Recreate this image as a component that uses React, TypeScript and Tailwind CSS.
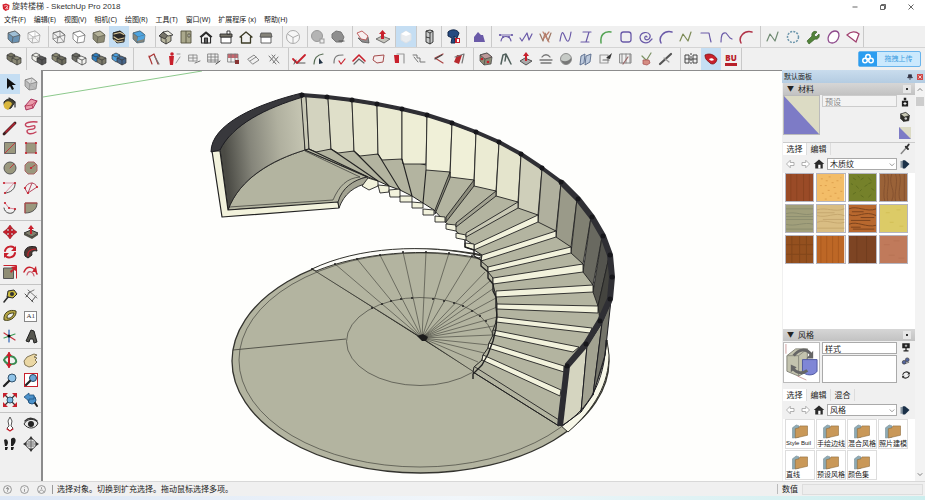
import type { ReactNode } from 'react';
import { clsx } from 'clsx';

const INK = '#2b2b2b';
const RED = '#c8202c';
const PURPLE = '#6a5aa8';

// Small shape helpers, all drawn on a 16x16 grid
function cube(fill: string, side: string, stroke = '#555') {
  return (
    <g stroke={stroke} strokeWidth="0.7" strokeLinejoin="round">
      <path d="M2 4 9 2l5 4-1 7-7 1-4-4z" fill={side} />
      <path d="M2 4 9 2l5 4-7 2z" fill={fill} />
      <path d="M7 8 6 14" fill="none" />
    </g>
  );
}

function solids(a: string, b: string) {
  return (
    <g stroke="#333" strokeWidth="0.7" strokeLinejoin="round">
      <path d="M1 4 5 2l4 2v6l-4 1-4-3z" fill={a} />
      <path d="M6 7 10 5l5 2v5l-4 2-5-3z" fill={b} />
      <path d="M6 7l5 2 4-2M11 9v5M1 4l4 2 4-2" fill="none" />
    </g>
  );
}

function line(d: string, color = INK, width = 1.2) {
  return <path d={d} fill="none" stroke={color} strokeWidth={width} strokeLinecap="round" strokeLinejoin="round" />;
}

function dots(points: number[][], color = RED) {
  return points.map(([x, y]) => <circle key={`${x}-${y}`} cx={x} cy={y} r="1.1" fill={color} />);
}

const icons: Record<string, ReactNode> = {
  select: <path d="M5 2v11l3-3 2 4 2-1-2-4h4z" fill="#111" />,
  xray: cube('#9fbfd6', '#6b93b3'),
  backEdges: <g>{cube('#fff', '#f4f4f4', '#999')}{line('M9 2v7l4 4M9 9l-7 1', '#bbb', 0.7)}</g>,
  wireframe: <g>{cube('none', 'none', '#666')}{line('M9 2v6L2 10M9 8l4 5', '#777', 0.7)}</g>,
  hiddenLine: cube('#fff', '#fff', '#666'),
  shaded: cube('#b5b39a', '#8e8c75', '#5d5c4d'),
  textured: (
    <g>
      {cube('#2d2b2a', '#2d2b2a', '#222')}
      {line('M3 5l6-1.500 4 2M3 8l4 2.500 6-1.500M3 11l4 2 5-1', '#d9c79b', 1.2)}
    </g>
  ),
  mono: (
    <g>
      {cube('#4ea4e0', '#85857b', '#4b6577')}
      <path d="M7 8l7-2-1 4-7 2z" fill="#4ea4e0" />
    </g>
  ),
  iso: (
    <g stroke={INK} strokeWidth="0.8" strokeLinejoin="round">
      <path d="M3 7v5l5 3 5-3V6L9 3z" fill="#b9b79f" />
      <path d="M1 7 5 3l5 3-3 4z" fill="#77756a" />
      <path d="M5 3l5-1 5 4-5 1z" fill="#e9e9df" />
      <path d="M8 10v5" />
    </g>
  ),
  top: (
    <g stroke="#55533f" strokeWidth="0.9">
      <path d="M3 2h10v12H3z" fill="#aaa88c" />
      <path d="M8 2v12M10 5h2v3h-2z" fill="#ddd" />
    </g>
  ),
  front: (
    <g stroke={INK} strokeWidth="1.2" strokeLinejoin="round">
      <path d="M2 8 8 3l6 5M3.500 8v6h9V8L8 4z" fill="#fff" />
      <path d="M6.500 14V9h3v5z" fill="#666" />
    </g>
  ),
  right: (
    <g stroke={INK} strokeWidth="0.9">
      <path d="M3 8h10v6H3z" fill="#fff" />
      <path d="M2 5h12v3H2z" fill="#77756a" />
      <path d="M9 2h3v3H9z" fill="#fff" />
    </g>
  ),
  back: line('M2 8 8 3l6 5H12.500v6h-9V8z', '#3b3a25', 1.3),
  left: (
    <g stroke="#555" strokeWidth="0.9">
      <path d="M3 8h10v6H3z" fill="#fff" />
      <path d="M3 4h10l1 4H2z" fill="#86847a" />
    </g>
  ),
  sphere: (
    <g stroke="#999" strokeWidth="0.8" fill="#f7f7f7">
      <circle cx="8" cy="8" r="6.500" />
      <path d="M2.500 5 8 8.500 13.500 6M8 8.500V14" fill="none" />
    </g>
  ),
  ballLight: <g><circle cx="7" cy="7" r="5.500" fill="#b4b4b4" stroke="#999" /><rect x="10" y="10" width="4" height="4" fill="#eee" stroke="#999" /></g>,
  ballDark: <g><path d="M2 5 6 2l5 1 3 5-2 5H6L2 9z" fill="#8f8f8f" stroke="#777" />{line('M9 12h5', '#555')}</g>,
  bevel: (
    <g>
      <path d="M3 9l4 4 7 1-1-6-5 2z" fill="#8d8d8d" stroke="#555" strokeWidth="0.8" />
      <path d="M2 4 7 2l6 5-2 4-5-1z" fill="#f8f0f0" stroke="#b55" strokeWidth="0.9" />
    </g>
  ),
  pushUp: (
    <g>
      <path d="M1 10l6-3 8 3-6 4z" fill="#c5c5bd" stroke="#555" strokeWidth="0.8" />
      <path d="M7.500 1 11 5H9v5H6V5H4z" fill={RED} />
    </g>
  ),
  softBall: <g><path d="M3 5 8 2l5 3v6l-5 3-5-3z" fill="#e9ecef" stroke="#dfe3e7" /><path d="M3 5 8 2l5 3-5 2z" fill="#fff" /></g>,
  cabinet: (
    <g stroke={INK} strokeWidth="0.9" fill="#c7c9c9">
      <path d="M5 2l4-1 3 1v11l-3 2-4-2z" />
      <path d="M9 4v11M5 2l4 2 3-2M5 8l4 1" fill="none" />
    </g>
  ),
  elephant: (
    <g>
      <path d="M2 3c3-3 9-3 11 1l-2 5-3-2 1 7H5L6 9 2 7z" fill="#254a80" stroke="#14284a" />
      <path d="M9 9h5v5H9z" fill={RED} /><path d="M11 10h2v3h-2z" fill="#fff" />
    </g>
  ),
  purpleBox: <path d="M3 13V8l4-5 3 3h2l2 7z" fill={PURPLE} />,
  arcDots: <g>{line('M3 12c1-6 9-6 10 0', PURPLE)}{line('M2 6h12', PURPLE, 0.9)}{dots([[2, 6], [14, 6], [5, 8], [11, 8]], PURPLE)}</g>,
  zig: line('M2 9l2 3 5-8 2 7 3-6', PURPLE),
  zigRed: <g>{line('M2 5l3 7 2-8 3 8 3-8', '#9c7764')}{line('M5 3l6 10M11 3 5 10', '#c08270')}</g>,
  wave: line('M2 12C4 0 5 3 7 8s4 8 6-5', PURPLE),
  iBeam: line('M5 3h8M11 3 8 13M3 13h8', PURPLE),
  arcGreen: line('M3 14C2 6 6 2 13 3', '#53a353', 1.5),
  rounded: <rect x="3" y="3" width="10" height="10" rx="2.500" fill="none" stroke={PURPLE} strokeWidth="1.300" />,
  spiral: line('M9 8c-1-2-3 0-2 2 2 2 6 0 5-4C10 2 3 3 2 8c0 5 5 7 9 5l3-3', PURPLE),
  arcPurple: line('M3 14C0 8 6 1 14 3', PURPLE, 1.5),
  zigOlive: line('M2 12 5 5l5 7 3-9', '#7c8a55'),
  hook: line('M3 4h8l1 5M12 9l1 4', PURPLE),
  hook2: line('M3 13C3 7 4 3 8 4l4 5 2 1', PURPLE),
  arcRed: line('M3 14C0 8 6 1 14 3', '#b03347', 1.5),
  zigGray: line('M2 12 5 5l5 7 3-9', '#6f8a72'),
  dashCircle: <circle cx="8" cy="8" r="5.500" fill="none" stroke="#6b95ab" strokeWidth="1.500" strokeDasharray="2 1.200" />,
  wrench: <path d="M2 12l5-5c-1-3 2-6 5-4L9 6l2 2 3-3c1 3-1 6-4 5l-6 5z" fill="#52833a" stroke="#3b6129" strokeWidth="0.700" />,
  leaf: <path d="M4 13C1 8 6 2 10 2s5 4 3 8-6 5-9 3z" fill="#fff" stroke="#8e4a8c" strokeWidth="1.300" />,
  pie: <path d="M2 6c4-4 9-4 12-1l-3 8z" fill="#fff" stroke="#a0406f" strokeWidth="1.300" />,

  outer: solids('#777563', '#8b8976'),
  intersect: solids('#f0f0ea', '#565656'),
  union: solids('#8d8b74', '#6e6d5e'),
  subtract: solids('#6e6e66', '#f1f1ee'),
  trim: solids('#2f7fc0', '#7d7b6b'),
  split: solids('#4ea0de', '#46658a'),

  curveRed: <g>{line('M3 5c1 3 2 5 3 8M3 6l5-3 4 10', '#a33')}{line('M9 6l4 7', '#777')}</g>,
  person: <g><path d="M3 5h5l-1 9H4z" fill={RED} /><circle cx="6" cy="3" r="1.800" fill={RED} />{line('M11 3h3M10 12l4-6', '#999', 1)}</g>,
  grid1: <g>{line('M3 4h8v6H3zM3 7h8M7 4v6', '#8a8a8a', 0.9)}{line('M9 12l5-2', '#777', 1)}</g>,
  grid2: <g>{line('M2 3h10v8H2zM2 6h10M2 9h10M5 3v8M9 3v8', '#777', 0.8)}{line('M10 13l4-3', '#444', 1)}</g>,
  grid3: <g><path d="M2 3h10v4H2z" fill="#c76870" />{line('M2 3h10v8H2zM5 3v8M9 3v8', '#777', 0.8)}<path d="M9 9h4v4H9z" fill="#833" /></g>,
  sheet: line('M2 8l6-4 5 5-6 4zM4 10l6-4', '#888', 1),
  clips: line('M3 5l7 8M6 4l7 8M4 10l5-6M7 12l5-6', '#777', 1),
  checkRed: <g>{line('M2 8l4 4 8-8', RED, 1.8)}{line('M7 12h7M5 9l-2 4', '#444', 0.9)}</g>,
  bend: <g>{line('M3 13C3 7 6 4 12 3', '#556b52')}<path d="M8 7l4 5-4 1z" fill="#234" /></g>,
  bendCheck: <g>{line('M3 12C3 5 6 4 12 4', '#777')}{line('M8 10l2 3 4-5', RED)}</g>,
  roof: <g>{line('M2 10l6-6 6 6', RED, 1.6)}{line('M3 13l5-5 5 4', '#666')}</g>,
  quad: <path d="M3 5l10-1-1 7-6 1-4-3z" fill="#f6eded" stroke="#a54b4b" />,
  redCorner: <g><path d="M3 4h5v8H4z" fill={RED} />{line('M6 3h7v9', '#999')}</g>,
  steps: line('M2 4h4v3h3v4h5M3 6l4 5', '#777', 1),
  angle: <g>{line('M12 3 4 7l8 5', '#a44')}{line('M11 4 4 8', '#444')}</g>,
  redFold: <g><path d="M6 4h5l-3 9-5-2z" fill="#b7292e" />{line('M4 6l9-3-2 9', '#777')}</g>,
  die: <g>{cube('#b99', '#8b8b76', '#444')}<circle cx="4" cy="8" r="1.300" fill={RED} /><circle cx="10" cy="11" r="1.300" fill={RED} /></g>,
  compass: line('M3 13 5 4l3-1 5 10M8 4 7 10', '#51605c', 1.5),
  extrude: <g><path d="M2 10l5-3 7 3-6 4z" fill="#aaa" stroke="#555" /><path d="M8 1l3 4H9v5H7V5H5z" fill={RED} /></g>,
  sweep: line('M2 9h12M3 12h10M4 6c2-3 6-3 8 0', '#777', 1.3),
  ballGray: <g><circle cx="8" cy="8" r="5.500" fill="#c6cac6" stroke="#777" strokeWidth="0.800" /><path d="M3 9c3 2 7 2 10-2v3c-2 4-8 5-10-1z" fill="#777" /></g>,
  panels: <g stroke="#56698a" strokeWidth="0.900" fill="#bcc9dc"><path d="M3 5l4-2-1 9-4 2zM8 5l5-2-1 8-5 3z" /></g>,
  noteArrow: <g>{line('M2 4h8v8H2z', '#999')}<path d="M14 2 8 7l4 1z" fill="#333" />{line('M5 9h6', '#666')}</g>,
  film: <g>{line('M2 3h11v9H2zM4 3v9M8 3v9M12 3v9', '#888', 1)}{line('M5 13l5-7', '#966')}</g>,
  plant: <g>{line('M8 10l5-8M8 9 4 5', '#7a9163')}<path d="M5 9h6l1 3-3 2-4-1z" fill="#d68d83" stroke="#a55" strokeWidth="0.800" /></g>,
  pens: <g>{line('M2 13 13 3', '#555', 2.2)}{line('M6 7l5 4', '#999')}</g>,
  mirror: <g fill="none" stroke="#444"><path d="M2 4h4v8H2zM10 4h4v8h-4zM2 8h12" /><path d="M8 2v12" strokeDasharray="2 1" /></g>,
  cushion: <g><path d="M2 4c4-2 9-1 12 4-1 6-6 6-8 3-3-2-4-4-4-7z" fill={RED} stroke="#7d1010" strokeWidth="0.800" /><path d="M6 8c2-1 4-1 5 1-2 1-4 1-5-1z" fill="#fff" /></g>,

  bucket: (
    <g>
      <path d="M2 6c3-4 8-4 11 0l-4 6c-4 2-7 0-7-6z" fill="#48452f" stroke={INK} />
      <path d="M2 8c2-4 7-3 8 0L6 14C3 13 1 11 2 8z" fill="#d9b63c" />
      {line('M7 2l6 4v5', '#333')}
    </g>
  ),
  eraser: <g><path d="M2 10 8 3l6 2-4 7-7 2z" fill="#e99cab" stroke="#914" strokeWidth="0.800" />{line('M2 10l7-1 5-4M9 9l1 3', '#a24', 0.7)}</g>,
  component: <g>{cube('#ddd', '#bbb', '#777')}{line('M3 5l9 7M9 3 6 13', '#aaa', 0.7)}</g>,
  pencil: <g>{line('M2 14 13 3', '#3a2020', 2.8)}{line('M4 12 12.500 3.500', '#b32432', 1.7)}</g>,
  freehand: line('M14 2C8 1 0 3 3 6s9-3 9 1-8 1-8 4 4 4 9 1', '#c4425c', 1.4),
  rect: <g><path d="M2.500 2.500h11v11h-11z" fill="#9a987e" stroke="#666" />{line('M3 13 13 3', RED, 0.8)}</g>,
  rotRect: <g><path d="M3 3h10v10H3z" fill="#9a987e" stroke="#966" />{dots([[3, 3], [13, 3], [13, 13], [3, 13]])}</g>,
  circle: <g><circle cx="8" cy="8" r="6" fill="#9a987e" stroke="#555" />{line('M8 8l4-4', RED, 0.8)}</g>,
  polygon: <g><path d="M5 2h6l3 3v6l-3 3H5l-3-3V5z" fill="#9a987e" stroke="#a66" />{line('M8 8l4-3', RED, 0.8)}{dots([[8, 8]])}</g>,
  arc1: <g>{line('M2 3h10L3 13', '#d8879a', 0.9)}{line('M13 3C14 9 8 13 3 13', '#555', 1)}{dots([[2, 3], [13, 3], [3, 13]])}</g>,
  arc2: <g>{line('M2 8C5 1 12 2 14 7L5 13zM5 13 9 3', '#b8485f', 1)}{dots([[2, 8], [14, 7], [5, 13]])}</g>,
  arc3: <g>{line('M3 3l4 5 6 1', '#d8879a', 1)}{line('M13 9c0 6-10 6-11-1', '#444', 1)}{dots([[3, 3], [7, 8], [13, 9]])}</g>,
  arc4: <g><path d="M2 3h12c0 6-4 10-12 10z" fill="#9a987e" stroke="#555" />{line('M2 13V3h12', '#c44', 0.9)}</g>,
  move: <g fill={RED} stroke="#8a0f18" strokeWidth="0.500"><path d="M8 1l3 4H9v2h2V5l4 3-4 3V9H9v2h2l-3 4-3-4h2V9H5v2L1 8l4-3v2h2V5H5z" /></g>,
  pushPull: <g><path d="M1 9l7-3 7 3-6 4z" fill="#807f6c" stroke="#333" /><path d="M1 9v2l8 4 6-4V9l-6 4z" fill="#525146" /><path d="M8 1l3 4H9v5H7V5H5z" fill={RED} /></g>,
  rotate: <g>{line('M3 7c1-5 8-6 10-2M13 9c-1 5-8 6-10 2', RED, 2)}<path d="M14 2v5h-5zM2 14V9h5z" fill={RED} /></g>,
  follow: <g><path d="M2 12C0 5 5 1 13 3l1 4c-4-1-6 1-5 4l-4 3z" fill="#4d3a35" stroke="#222" />{line('M5 12c-1-5 3-7 8-7', RED)}</g>,
  scale: <g><path d="M1.500 4h10v10.500h-10z" fill="#8f8d74" stroke="#555" /><path d="M1.500 1.500h13v13" fill="none" stroke={RED} /><path d="M8 7 11 5 9 3l5-1v5l-2-1-3 3z" fill={RED} /></g>,
  offset: <g>{line('M1 8C4 1 11 2 14 10', RED, 1.5)}{line('M4 11c1-5 6-4 7 1', '#c86070')}<path d="M9 8l4-6 1 6z" fill={RED} /></g>,
  tape: <g><path d="M6 3l6-1 3 4-4 4-6-1z" fill="#c9b83c" stroke={INK} /><circle cx="10" cy="6" r="2" fill="#333" />{line('M6 9 2 14', INK, 1.6)}</g>,
  dimension: <g>{line('M2 6l8 8M3 9l4-5M9 13l4-5', '#555', 1)}{line('M5 2l9 8M5 5l6-3', '#777', 1)}</g>,
  protractor: <path d="M2 12C1 4 8 1 14 3c1 5-5 11-12 9zm3-2c4 1 6-2 7-5-4 0-7 1-7 5z" fill="#b5a545" stroke="#45421c" fillRule="evenodd" />,
  axes: <g>{line('M7 2v12', '#2b62b5')}{line('M2 5l11 7', '#c22f3b')}{line('M2 10l11-4', '#3b9a56')}<circle cx="7" cy="8" r="1.500" /></g>,
  text3d: <path d="M3 13 8 2l3 1 3 11-3 1-1-4H7l-1 3z" fill="#56564f" stroke="#222" />,
  orbit: <g>{line('M2 8c2-5 10-5 12 0s-9 6-12 0', '#3a8b52', 2)}{line('M7 1v14', RED, 2)}<path d="M4 4l3-4 3 4zM4 12h6l-3 4z" fill={RED} /></g>,
  pan: <path d="M2 13 1 9l3-4 7-3 3 1-3 2 3 1-2 2 2 2-4 4-4 1z" fill="#ead7a4" stroke="#776b4b" strokeWidth="0.900" />,
  zoom: <g><circle cx="10" cy="6" r="4" fill="#8fc3e8" stroke="#31536d" />{line('M7 9 2 14', '#222', 2.3)}</g>,
  zoomWin: <g><rect x="1.500" y="1.500" width="13" height="13" fill="#fff" stroke={RED} /><circle cx="10" cy="6" r="3.500" fill="#6aa4d4" stroke="#2a435d" />{line('M7 9 3 13', '#222', 2.2)}</g>,
  extents: <g>{line('M3 3l10 10M13 3 3 13', '#333', 1.2)}<path d="M1 1h5L1 6zM15 1v5l-5-5zM1 15v-5l5 5zM15 15h-5l5-5z" fill={RED} /><circle cx="8" cy="8" r="3" fill="#7db8e0" stroke="#31536d" /></g>,
  previous: <g><circle cx="9" cy="8" r="4" fill="#4b91ca" stroke="#22537e" /><path d="M1 5 6 1v2h5v4H6v2z" fill="#4b91ca" stroke="#22537e" strokeWidth="0.800" />{line('M12 11l2 3', '#222', 2)}</g>,
  camera: <g><path d="M8 1l2 4-1 5 2 2-3 3-3-3 2-2-1-5z" fill="#fff" stroke="#555" />{line('M5 13l3 2 3-2', RED)}</g>,
  look: <g><path d="M1 8C4 2 12 2 15 7c-2 6-10 7-14 1z" fill="#e6e6e6" stroke="#333" /><circle cx="8" cy="8" r="3" fill="#222" />{line('M2 5c4-4 9-3 12 0', '#333', 1.5)}</g>,
  walk: <g fill="#222"><path d="M2 4c2-2 4 0 4 3l-1 3H3zM3 11h3l-1 3H3zM9 3c3-3 6 0 4 4l-2 3H9zM9 11h3l-1 3H9z" /></g>,
  section: <g><circle cx="8" cy="8" r="5" fill="#e5e5e5" stroke="#444" /><path d="M8 0l2 3H6zM8 16l2-3H6zM0 8l3-2v4zM16 8l-3-2v4z" fill="#333" />{line('M4 8h8M8 4v8M5 6h6M5 10h6', '#555', 0.8)}</g>,
  home: <g><path d="M1 8 8 2l7 6h-2v6H3V8z" fill={INK} /><path d="M7 9h3v5H7z" fill="#fff" /></g>,
  arrowLeft: <path d="M2 8l5-5v3h5v4H7v3z" fill="#fff" stroke="#999" />,
  arrowRight: <path d="M14 8 9 3v3H4v4h5v3z" fill="#fff" stroke="#999" />,
  details: <g><path d="M2 4h5v9H2z" fill="#8794a0" /><path d="M5 3h3l6 5-6 6H5z" fill="#1a3048" /></g>,
  dropper: <g>{line('M3 14l7-8', '#888', 2)}{line('M9 5l3 3M10 6l3-4', '#333', 2.5)}</g>,
  makeMat: <g><path d="M3 6h10v9H3zM6 1h4v4H6z" fill="#222" /><path d="M8 8v5M5.500 10.500h5" stroke="#fff" strokeWidth="1.500" /></g>,
  darkCube: <g>{cube('#c9c9b5', '#2e2e29', '#222')}<circle cx="9" cy="10" r="1.700" fill="#ccc" /></g>,
  screen: <g><path d="M2 2h12v8H2zM7 10h2v3H7zM4 13h8v2H4z" fill="#222" /><path d="M8 4v4M6 6h4" stroke="#fff" /></g>,
  clouds: <g fill="#5566a0" stroke="#333"><circle cx="5" cy="10" r="3" /><circle cx="10" cy="6" r="3" /><path d="M7 12l6-2" /></g>,
  refresh: <g>{line('M3 7c1-4 8-6 10-1M13 9c-1 4-8 6-10 1', INK, 1.7)}<path d="M14 3v4h-4zM2 13V9h4z" fill={INK} /></g>,
};

function Icon({ name, className = 'size-4' }: { name: string; className?: string }) {
  return (
    <svg viewBox="0 0 16 16" className={clsx('shrink-0', className)} aria-hidden="true">
      {icons[name]}
    </svg>
  );
}

function ToolButton({ name, active = false }: { name: string; active?: boolean }) {
  return (
    <button
      type="button"
      aria-label={name}
      className={clsx('flex h-full w-5 shrink-0 items-center justify-center', active && 'bg-[#c5def3]')}
    >
      {name === 'label' && (
        <span className="border border-[#888] bg-white px-px font-['Liberation_Serif',serif] text-[7px] leading-[9px] text-[#333]">A1</span>
      )}
      {name === 'bu' && (
        <span className="flex flex-col items-center text-[#b8202a]">
          <span className="text-[8px] font-black leading-[10px]">BU</span>
          <span className="h-[3px] w-3 bg-[#b8202a]" />
        </span>
      )}
      {icons[name] && <Icon name={name} />}
    </button>
  );
}

type Group = { gap: string; tools: string[] };

const topRow: Group[] = [
  { gap: 'px-1', tools: ['xray', 'backEdges'] },
  { gap: 'pr-1.5', tools: ['wireframe', 'hiddenLine', 'shaded', 'textured*', 'mono'] },
  { gap: 'pr-1.5', tools: ['iso', 'top', 'front', 'right', 'back', 'left'] },
  { gap: 'pr-1', tools: ['sphere'] },
  { gap: 'pr-1', tools: ['ballLight', 'ballDark'] },
  { gap: 'pr-0.5', tools: ['bevel', 'pushUp'] },
  { gap: '', tools: ['softBall*'] },
  { gap: 'px-0.5', tools: ['cabinet'] },
  { gap: 'px-0.5', tools: ['elephant'] },
  { gap: 'px-0.5', tools: ['purpleBox'] },
  {
    gap: 'px-1',
    tools: ['arcDots', 'zig', 'zigRed', 'wave', 'iBeam', 'arcGreen', 'rounded', 'spiral', 'arcPurple', 'zigOlive', 'hook', 'hook2', 'arcRed'],
  },
  { gap: 'pl-0.5', tools: ['zigGray', 'dashCircle', 'wrench', 'leaf', 'pie'] },
];

const secondRow: Group[] = [
  { gap: 'pl-1 pr-0.5', tools: ['outer'] },
  { gap: 'pl-0.5 pr-1', tools: ['intersect', 'union', 'subtract', 'trim', 'split'] },
  { gap: 'pl-2.5 pr-1', tools: ['curveRed', 'person', 'grid1', 'grid2', 'grid3', 'sheet', 'clips'] },
  { gap: 'pr-1', tools: ['checkRed', 'bend', 'bendCheck', 'roof', 'quad', 'redCorner', 'steps', 'angle', 'redFold'] },
  { gap: 'pl-0.5 pr-1', tools: ['die', 'compass', 'extrude', 'sweep', 'ballGray', 'panels', 'noteArrow', 'film', 'plant', 'pens'] },
  { gap: '', tools: ['mirror', 'cushion*', 'bu'] },
];

const palette: string[][] = [
  ['select*', 'component', 'bucket', 'eraser'],
  ['pencil', 'freehand', 'rect', 'rotRect', 'circle', 'polygon', 'arc1', 'arc2', 'arc3', 'arc4'],
  ['move', 'pushPull', 'rotate', 'follow', 'scale', 'offset'],
  ['tape', 'dimension', 'protractor', 'label', 'axes', 'text3d'],
  ['orbit', 'pan', 'zoom', 'zoomWin', 'extents', 'previous'],
  ['camera', 'look', 'walk', 'section'],
];

function Toolbar({ groups }: { groups: Group[] }) {
  return (
    <div className="flex h-full">
      {groups.map((group) => (
        <div key={group.tools[0]} className={clsx('flex border-r border-[#c9c9c9]', group.gap)}>
          {group.tools.map((tool) => (
            <ToolButton key={tool} name={tool.replace('*', '')} active={tool.endsWith('*')} />
          ))}
        </div>
      ))}
    </div>
  );
}

// Geometry of the staircase, in model view coordinates
type Point = [number, number];

const pts = (list: Point[]) => list.map((p) => p.join(',')).join(' ');

const rail: Point[] = [
  [302, 95], [327, 97], [352, 100], [377, 104], [402, 109], [427, 115], [452, 123], [476, 132], [499, 142],
  [521, 154], [542, 168], [561, 182], [578, 199], [592, 217], [603, 236], [610, 255], [612, 277], [610, 299],
  [600, 321], [586, 344], [567, 366],
];

// top of each wall seam, where it meets the tread, and the corner of the tread below it
const seams: { top: Point; foot: Point; step: Point; back: Point; shade: string }[] = [
  { top: [306, 96], foot: [309, 149], step: [309, 149], back: [316, 152], shade: '#d3d3bf' },
  { top: [328, 98], foot: [331, 149], step: [331, 149], back: [338, 153], shade: '#dfdfc9' },
  { top: [352, 101], foot: [354, 151], step: [354, 151], back: [360, 156], shade: '#e6e6ce' },
  { top: [377, 105], foot: [378, 154], step: [378, 154], back: [382, 160], shade: '#eaead2' },
  { top: [402, 110], foot: [402, 159], step: [402, 159], back: [403, 164], shade: '#eeeed6' },
  { top: [427, 116], foot: [426, 164], step: [426, 170], back: [426, 170], shade: '#f0f0d8' },
  { top: [452, 124], foot: [450, 172], step: [450, 177], back: [450, 177], shade: '#f0f0d8' },
  { top: [476, 133], foot: [474, 180], step: [474, 186], back: [474, 186], shade: '#ebebd3' },
  { top: [499, 143], foot: [496, 191], step: [496, 196], back: [496, 196], shade: '#e4e4cc' },
  { top: [521, 155], foot: [518, 202], step: [518, 208], back: [518, 208], shade: '#cfcfba' },
  { top: [542, 169], foot: [538, 215], step: [538, 222], back: [538, 222], shade: '#b0b09e' },
  { top: [561, 183], foot: [556, 231], step: [556, 237], back: [556, 237], shade: '#9a9a89' },
  { top: [577, 199], foot: [571, 247], step: [571, 253], back: [571, 253], shade: '#808072' },
  { top: [591, 217], foot: [583, 264], step: [583, 272], back: [583, 272], shade: '#696960' },
  { top: [602, 237], foot: [593, 285], step: [593, 292], back: [593, 292], shade: '#54544e' },
  { top: [609, 257], foot: [598, 306], step: [598, 313], back: [598, 313], shade: '#494945' },
];

// cream riser faces: inner top, inner bottom, outer bottom, outer top
const risers: Point[][] = [
  [[474, 245], [474, 250], [538, 222], [538, 215]],
  [[482, 255], [481, 261], [556, 237], [556, 231]],
  [[488, 267], [488, 272], [571, 253], [571, 247]],
  [[493, 278], [493, 284], [583, 272], [583, 264]],
  [[496, 291], [496, 297], [593, 292], [593, 285]],
  [[497, 304], [497, 309], [598, 313], [598, 306]],
  [[497, 317], [496, 322], [590, 333], [592, 328]],
  [[493, 330], [493, 335], [573, 352], [579, 347]],
  [[489, 343], [488, 348], [564, 372], [564, 366]],
  [[483, 355], [482, 360], [560, 396], [561, 390]],
];

// short inner faces that climb along the open edge
const noses: Point[][] = [
  [[368, 178], [378, 181], [378, 186], [369, 190], [362, 186]],
  [[378, 185], [389, 186], [389, 192], [380, 193]],
  [[389, 190], [400, 189], [400, 197], [390, 197]],
  [[400, 196], [412, 196], [412, 202], [400, 202]],
  [[412, 202], [423, 203], [423, 208], [412, 208]],
  [[423, 209], [434, 210], [434, 215], [423, 215]],
  [[435, 216], [445, 217], [445, 222], [435, 222]],
  [[446, 224], [456, 225], [456, 231], [446, 229]],
  [[456, 233], [466, 235], [466, 240], [456, 238]],
  [[465, 243], [474, 244], [474, 250], [465, 247]],
];

const fan: Point[] = [
  [335, 264], [357, 259], [380, 255], [403, 252], [426, 252], [449, 253], [472, 256], [485, 272], [490, 281],
  [494, 288], [496, 298], [497, 307], [497, 317], [494, 326], [492, 335], [489, 345], [484, 353], [478, 362],
];

function Staircase() {
  return (
    <svg viewBox="43 71 739 409" className="block w-full" role="img" aria-label="旋转楼梯">
      <defs>
        <linearGradient id="wall" x1="0" x2="1" y1="0.15" y2="0">
          <stop offset="0" stopColor="#4b4b45" />
          <stop offset="0.3" stopColor="#85857a" />
          <stop offset="0.65" stopColor="#b0b09f" />
          <stop offset="1" stopColor="#c9c9b6" />
        </linearGradient>
      </defs>
      <path d="M43 97 202 71" stroke="#8cc98c" strokeWidth="1" />

      {/* ground disc */}
      <g fill="#b3b4a0" stroke="#33332e" strokeWidth="1">
        <ellipse cx="420.500" cy="361" rx="188.500" ry="112" strokeWidth="1.300" />
        <path d="M609 355c0 28-14 54-41 77l-8-7c27-16 43-45 47-85z" fill="#f7f7e8" />
        <ellipse cx="420" cy="360" rx="181" ry="107" strokeWidth="0.600" />
        <path d="M312 269C358 247 424 243 482 256l-3 2C425 247 360 253 316 271z" fill="#fbfbf7" />
        <ellipse cx="420" cy="341.500" rx="73.500" ry="44" fill="none" strokeWidth="0.600" />
      </g>
      <g stroke="#3c3c36" strokeWidth="0.600">
        {fan.map(([x, y]) => (
          <line key={`${x}-${y}`} x1="422" y1="338" x2={x} y2={y} />
        ))}
        <path d="M312 269 422 338l52 34M233 350l113-11" strokeWidth="0.800" />
      </g>
      <path d="M417 336l6-2 5 3-2 4h-4z" fill="#1c1c1c" />
      {fan.slice(0, 7).map(([x, y]) => (
        <circle key={`${x}-${y}`} cx={x} cy={y} r="1" fill="#222" />
      ))}
      <g fill="#222">
        {[[312, 269], [372, 308], [382, 304], [391, 301], [401, 299], [412, 298], [433, 299], [444, 301], [454, 303], [463, 306], [472, 311], [480, 316], [486, 321]].map(([x, y]) => (
          <circle key={x} cx={x} cy={y} r="1" />
        ))}
      </g>

      {/* landing */}
      <g stroke="#222" strokeWidth="0.900" strokeLinejoin="round">
        <path d="M228 210c10-30 44-50 77-60l62 27c-13 3-22 11-27 26z" fill="#b3b4a0" />
        <path d="M220 149c14-25 48-43 82-54l3 55c-33 10-65 28-77 60z" fill="url(#wall)" />
        <path d="M212 151h8l8 59 110-8 1 6-117 9z" fill="#f2f2dc" strokeWidth="1.200" />
        <path d="M229 207l104-7c6-14 14-22 27-23l-55-26" fill="none" strokeWidth="0.600" />
        <path d="M338 202c4-14 15-22 29-25l2 6c-15 3-25 11-30 25z" fill="#a3a392" />
        <path d="M301 95l4 55 4-1-3-53z" fill="#c8c8b5" />
      </g>

      {/* treads */}
      <polygon
        fill="#b3b4a0"
        stroke="#222"
        strokeWidth="1"
        points={pts([
          [305, 150], [309, 149], [331, 149], [354, 151], [378, 154], [402, 159], [426, 165], [450, 172], [474, 180], [496, 191],
          [518, 202], [538, 215], [556, 231], [571, 247], [583, 264], [593, 285], [600, 306], [600, 325],
          [567, 366], [559, 426], [473, 372], [474, 367], [482, 360], [483, 355], [488, 348], [489, 343],
          [493, 335], [493, 330], [496, 322], [497, 309], [497, 304], [496, 297], [493, 284], [493, 278], [488, 272],
          [488, 267], [481, 261], [482, 255], [474, 250], [474, 245], [466, 240], [456, 231], [445, 222],
          [434, 210], [423, 203], [412, 196], [400, 190], [389, 186], [378, 181], [368, 177],
        ])}
      />
      <g stroke="#222" strokeWidth="0.900" strokeLinejoin="round">
        {seams.slice(0, -1).map((seam, i) => (
          <polygon
            key={seam.shade + i}
            fill={seam.shade}
            points={pts([seam.top, seams[i + 1].top, seams[i + 1].foot, seam.back, seam.step])}
          />
        ))}
        <polygon fill="#44443f" points="609,257 612,277 609,299 600,321 598,306" />
        {risers.map((face) => (
          <polygon key={face[0].join()} fill="#f2f2dc" points={pts(face)} />
        ))}
        {noses.map((face) => (
          <polygon key={face[0].join()} fill="#f2f2dc" points={pts(face)} />
        ))}
        <g fill="#8c8c7c">
          <path d="M450 172v6l-15 36v-4z" />
          <path d="M474 180v6l-28 36v-5z" />
          <path d="M496 191v5l-40 31v-4z" fill="#a3a392" />
          <path d="M518 202v6l-52 29v-4z" fill="#c9c9b5" />
        </g>
        <path d="M309 149l59 28M331 149l47 32M354 151l35 35M378 154l22 36M402 159l10 37M426 170l-3 33" fill="none" strokeWidth="1.100" />
        <path d="M475 367l84 53M473 372l86 54" fill="none" />
        <path d="M465 240v7l9 3v6l7 4v6l7 6v6l5 6v7l3 6v10l1 8-1 13-3 13-5 13-6 11-9 9v5" fill="none" strokeWidth="1.400" />
      </g>

      {/* outer wall next to the first steps */}
      <g stroke="#1d1d22" strokeLinejoin="round">
        <path d="M567 368l20-22-6 66-19 14z" fill="#d5d5c0" />
        <path d="M587 346l15-23-9 72-12 17z" fill="#a2a291" />
        <path d="M602 323l9-23-6 55-12 40z" fill="#74746a" />
        <path d="M563 425c25-16 42-42 43-85" fill="none" />
        <path d="M567 366l-7 60" stroke="#2c2c31" strokeWidth="6" />
      </g>

      {/* handrail */}
      <path d="M211 152c0-28 46-48 91-59l1 4c-37 11-71 28-83 53z" fill="#38383c" stroke="#1d1d22" />
      <polyline points={pts(rail.slice(0, 12))} fill="none" stroke="#2f2f34" strokeWidth="4" strokeLinejoin="round" />
      <polyline points={pts(rail.slice(11))} fill="none" stroke="#2f2f34" strokeWidth="6" strokeLinejoin="round" />
      {rail.map(([x, y]) => (
        <circle key={`${x}-${y}`} cx={x} cy={y} r="2.500" fill="#17171b" />
      ))}
    </svg>
  );
}

const menus = ['文件(F)', '编辑(E)', '视图(V)', '相机(C)', '绘图(R)', '工具(T)', '窗口(W)', '扩展程序 (x)', '帮助(H)'];

const woods = [
  { base: '#9a4b27', grain: '#8b4421' },
  { base: '#f3bd68', grain: '#dd9f4c' },
  { base: '#75812a', grain: '#5f6d20' },
  { base: '#9a6238', grain: '#85522f' },
  { base: '#a19f7b', grain: '#8b8c6e' },
  { base: '#d9bd83', grain: '#c6a870' },
  { base: '#b8682e', grain: '#7b431d' },
  { base: '#dccb67', grain: '#d3bf56' },
  { base: '#94501f', grain: '#82461b' },
  { base: '#bd6726', grain: '#aa5a1f' },
  { base: '#7d4423', grain: '#713d1f' },
  { base: '#c07a5b', grain: '#b87355' },
];

const grains = [
  'M5 0v28M11 0v28M18 0v28M24 0v28',
  'M4 5h2M12 3h2M20 7h2M8 12h2M17 14h2M24 18h2M5 20h2M13 23h2M21 25h2M3 12h2M9 7h2M15 9h2M24 4h1M11 17h2M18 20h2M8 26h2',
  'M4 4l3 2M12 6l3-2M20 4l3 3M7 12l3 3M16 13l3-2M23 15l3 2M4 21l3-2M12 22l3 2M20 24l3-3M9 2l2 2M2 10l2 1M20 10l3-1M11 18l2-2',
  'M4 0c3 10-2 18 1 28M12 0c-4 12 5 16 0 28M20 0c3 9-3 20 1 28M25 0v28M8 0c2 12-2 18 0 28M16 0c3 10-2 20 0 28',
  'M0 4h28M0 9c10-3 18 3 28 0M0 12h28M0 15h28M0 20c9 3 19-3 28 0M0 25h28',
  'M0 5c10-3 18 3 28-1M0 11c10 3 18-4 28 0M0 18c9-4 19 3 28 0M0 24h28M0 8h18M6 15h22',
  'M0 4c8-4 18 4 28 0M0 10c9 4 16-5 28 1M2 16h20M0 20c8-4 18 4 28 1M4 25h22M3 7h12M12 13h14M2 23h10',
  'M6 8h4M17 5h4M10 18h4M20 22h4',
  'M6 0v28M14 0v28M21 0v28M0 9h28M0 19h28',
  'M4 0v28M10 0v28M16 0v28M22 0v28',
  'M8 0v28M18 0v28',
  'M4 9h6M14 5h6M9 20h6M19 23h6',
];

const folders = ['Style Buil', '手绘边线', '混合风格', '照片建模', '直线', '预设风格', '颜色集'];

function PanelHeader({ title }: { title: string }) {
  return (
    <div className="flex h-3 items-center bg-gradient-to-b from-[#d6d6d6] to-[#c2c2c2] px-1 text-[#222]">
      <span className="mr-1 text-[7px]">▼</span>
      <h2 className="flex-1">{title}</h2>
      <button type="button" aria-label={`关闭${title}`} className="flex size-2 items-center justify-center bg-[#e6e6e6]">
        <span className="size-0.5 bg-[#333]" />
      </button>
    </div>
  );
}

function Tabs({ names, children }: { names: string[]; children?: ReactNode }) {
  return (
    <div className="flex h-3 items-center">
      {names.map((name, i) => (
        <button
          key={name}
          type="button"
          className={clsx('h-full w-6 border-r border-[#ddd] text-center', i === 0 && 'bg-white')}
        >
          {name}
        </button>
      ))}
      <span className="ml-auto pr-1">{children}</span>
    </div>
  );
}

function NavRow({ label, value }: { label: string; value: string }) {
  return (
    <div className="flex h-[18px] items-center gap-0.5 pl-0.5 pr-1">
      <button type="button" aria-label="后退"><Icon name="arrowLeft" className="size-3" /></button>
      <button type="button" aria-label="前进"><Icon name="arrowRight" className="size-3" /></button>
      <button type="button" aria-label="主页"><Icon name="home" className="size-3" /></button>
      <div className="relative min-w-0 flex-1">
        <select aria-label={label} className="block h-3 w-full appearance-none border border-[#aaa] bg-white px-0.5 text-[8px] leading-[10px]">
          <option>{value}</option>
        </select>
        <svg viewBox="0 0 8 8" className="pointer-events-none absolute right-0.5 top-1 size-1.5" aria-hidden="true">
          <path d="M1 2l3 3 3-3" fill="none" stroke="#777" />
        </svg>
      </div>
      <button type="button" aria-label="详细信息"><Icon name="details" className="size-3" /></button>
    </div>
  );
}

function MaterialsPanel() {
  return (
    <section className="flex flex-1 flex-col">
      <PanelHeader title="材料" />
      <div className="flex h-12 gap-0.5 border-b border-[#ccc] pr-1">
        <svg viewBox="0 0 36 40" className="h-10 w-[37px] border border-[#bbb]" preserveAspectRatio="none" aria-hidden="true">
          <path d="M0 0h36v40H0z" fill="#dcdbc4" />
          <path d="M0 0v40h36z" fill="#7d7bc6" />
        </svg>
        <input aria-label="材料名称" defaultValue="预设" className="h-3 min-w-0 flex-1 border border-[#ccc] bg-[#f3f3f3] px-0.5 text-[#888]" />
        <div className="flex flex-col items-center gap-1 pt-0.5">
          <button type="button" aria-label="创建材质"><Icon name="makeMat" className="size-[10px]" /></button>
          <button type="button" aria-label="显示辅助"><Icon name="darkCube" className="size-3" /></button>
          <svg viewBox="0 0 12 12" className="size-3" aria-hidden="true">
            <path d="M0 0h12v12H0z" fill="#dcdbc4" />
            <path d="M0 0v12h12z" fill="#7d7bc6" />
          </svg>
        </div>
      </div>
      <Tabs names={['选择', '编辑']}>
        <Icon name="dropper" className="size-3" />
      </Tabs>
      <NavRow label="材质集" value="木质纹" />
      <div className="flex-1 bg-white pl-0.5">
        <div className="grid w-[123px] grid-cols-4 gap-[2px]">
          {woods.map((wood, i) => (
            <button key={wood.base} type="button" aria-label={`木质纹 ${i + 1}`} className="h-[29px] border border-[#b5b5c0]">
              <svg viewBox="0 0 28 28" className="size-full" preserveAspectRatio="none" aria-hidden="true">
                <path d="M0 0h28v28H0z" fill={wood.base} />
                <path d={grains[i]} fill="none" stroke={wood.grain} strokeWidth="1" />
              </svg>
            </button>
          ))}
        </div>
      </div>
    </section>
  );
}

function StylesPanel() {
  return (
    <section>
      <PanelHeader title="风格" />
      <div className="flex h-11 gap-0.5 pr-1 pt-px">
        <svg viewBox="0 0 36 40" className="h-[41px] w-[37px] border border-[#bbb] bg-white" aria-hidden="true">
          <path d="M3 13 12 6h12v23l-9 5-12-5z" fill="#c3c3ae" stroke="#85857a" />
          <path d="M3 13h12l9-7M15 13v21" fill="none" stroke="#8c8c80" />
          <path d="M19 17h15v12c-3 5-12 5-15 0z" fill="#7f86d6" stroke="#5159a0" />
          <path d="M10 13c5-7 13-8 18-1M24 28c-5 4-11 3-15-2" fill="none" stroke="#666" strokeWidth="3" />
          <path d="M30 8v8h-7zM7 30v-8l6 3z" fill="#666" />
          <path d="M2 1v10M14 34l9 4" stroke="#b77" strokeWidth="0.700" />
        </svg>
        <div className="flex min-w-0 flex-1 flex-col gap-px">
          <input aria-label="样式名称" defaultValue="样式" className="h-3 w-full border border-[#aaa] bg-white px-0.5" />
          <textarea aria-label="样式说明" className="h-7 w-full resize-none border border-[#aaa] bg-white" />
        </div>
        <div className="flex flex-col items-center gap-1 pl-0.5">
          <button type="button" aria-label="辅助窗格"><Icon name="screen" className="size-[10px]" /></button>
          <button type="button" aria-label="新建样式"><Icon name="clouds" className="size-[10px]" /></button>
          <button type="button" aria-label="更新样式"><Icon name="refresh" className="size-[10px]" /></button>
        </div>
      </div>
      <div className="pt-1">
        <Tabs names={['选择', '编辑', '混合']} />
      </div>
      <NavRow label="样式集" value="风格" />
      <div className="bg-white pb-px pl-0.5">
        <div className="grid w-[123px] grid-cols-4 gap-px">
          {folders.map((folder, i) => (
            <button key={folder} type="button" className="flex h-[30px] flex-col items-center overflow-hidden border border-[#ddd] pt-1">
              <svg viewBox="0 0 20 16" className="h-[15px] w-5 shrink-0" aria-hidden="true">
                <path d="M2 4l4-3 3 1v12l-7 1z" fill="#8eabb5" stroke="#728994" strokeWidth="0.600" />
                <path d="M5 5l4-1 1-2 8 0v10L5 15z" fill="#c99858" stroke="#8b6738" strokeWidth="0.600" />
              </svg>
              <span className={clsx('w-full whitespace-nowrap text-left leading-[9px]', i === 0 ? "font-['Liberation_Sans',sans-serif] text-[6px]" : 'text-[7px]')}>
                {folder}
              </span>
            </button>
          ))}
        </div>
      </div>
    </section>
  );
}

export default function App() {
  return (
    <div className="flex min-h-screen flex-col bg-[#f0f0f0] font-['Noto_Sans','Noto_Sans_CJK_SC',sans-serif] text-[8px] leading-[10px] text-[#222]">
      <header className="bg-white">
        <div className="flex h-3.5 items-center pl-0.5">
          <svg viewBox="0 0 16 16" className="mr-0.5 size-2" aria-hidden="true">
            <path d="M1 3 8 1l7 3-1 9-7 3-5-4z" fill="#d51f2c" />
            <path d="M4 6l5-1 3 2-4 2 4 1-1 2-5-1" fill="none" stroke="#fff" strokeWidth="1.200" />
          </svg>
          <h1 className="font-['Liberation_Sans','Noto_Sans_CJK_SC',sans-serif] text-[8px] text-[#333]">旋转楼梯 - SketchUp Pro 2018</h1>
          <div className="ml-auto flex">
            {['M3 8h10', 'M3 5h8v8H3zM5 5V3h8v8h-2', 'M3 3l10 10M13 3 3 13'].map((d, i) => (
              <button key={d} type="button" aria-label={['最小化', '还原', '关闭'][i]} className="flex w-7 justify-center">
                <svg viewBox="0 0 16 16" className="size-2" aria-hidden="true">
                  <path d={d} fill="none" stroke="#333" strokeWidth="1.500" />
                </svg>
              </button>
            ))}
          </div>
        </div>
        <nav className="flex h-3 items-center gap-2 pl-1 text-[7px]">
          {menus.map((menu) => (
            <button key={menu} type="button">{menu}</button>
          ))}
        </nav>
      </header>

      <div className="h-[22px] border-b border-[#d4d4d4]">
        <Toolbar groups={topRow} />
      </div>
      <div className="flex h-[22px] items-center justify-between pr-1">
        <Toolbar groups={secondRow} />
        <button type="button" className="flex h-4 w-[63px] items-center rounded-xs border border-[#69b4ec] bg-[#cbe9fd] text-[7px] text-[#3c9ce0]">
          <span className="flex h-full w-[18px] items-center justify-center bg-[#2b9df0]">
            <svg viewBox="0 0 16 16" className="size-3" fill="none" stroke="#fff" strokeWidth="2" aria-hidden="true">
              <circle cx="8" cy="5" r="3" />
              <circle cx="4" cy="10" r="3" />
              <circle cx="12" cy="10" r="3" />
            </svg>
          </span>
          <span className="flex-1 text-center">拖拽上传</span>
        </button>
      </div>

      <main className="flex flex-1">
        <aside className="w-[43px] shrink-0 border-r-2 border-[#8c8c8c] pt-1" aria-label="大工具集">
          {palette.map((group, i) => (
            <div key={group[0]} className={clsx('grid grid-cols-2', i > 0 && 'mt-[2px] border-t border-[#c4c4c4] pt-px')}>
              {group.map((tool) => (
                <div key={tool} className="flex h-5 justify-center">
                  <ToolButton name={tool.replace('*', '')} active={tool.endsWith('*')} />
                </div>
              ))}
            </div>
          ))}
        </aside>

        <div className="min-w-0 flex-1 border-t border-[#8c8c8c] bg-[#fefefc]">
          <Staircase />
        </div>

        <aside className="flex w-[143px] shrink-0 flex-col" aria-label="默认面板">
          <div className="flex h-[13px] items-center bg-gradient-to-b from-[#c9dced] to-[#b4cce2] pl-0.5">
            <span className="flex-1 text-[7px]">默认面板</span>
            <svg viewBox="0 0 8 8" className="mr-1 size-1.5" aria-hidden="true">
              <path d="M2 1h4v3h1v1H1V4h1zM4 5v3" fill="#334" stroke="#334" />
            </svg>
            <button type="button" aria-label="关闭面板" className="mr-0.5 flex size-1.5 items-center justify-center bg-[#cf4a4a]">
              <svg viewBox="0 0 8 8" className="size-1.5" aria-hidden="true">
                <path d="M2 2l4 4M6 2 2 6" stroke="#fff" />
              </svg>
            </button>
          </div>
          <div className="flex flex-1">
            <div className="flex min-w-0 flex-1 flex-col pl-px">
              <MaterialsPanel />
              <StylesPanel />
            </div>
            <div className="flex w-[10px] flex-col items-center justify-between bg-[#f3f3f3] py-1">
              <div className="flex w-full flex-col items-center gap-1">
                <svg viewBox="0 0 8 8" className="size-1.5" aria-hidden="true"><path d="M1 5l3-3 3 3" fill="none" stroke="#555" /></svg>
                <span className="h-[9px] w-2 bg-[#cdcdcd]" />
              </div>
              <svg viewBox="0 0 8 8" className="size-1.5" aria-hidden="true"><path d="M1 3l3 3 3-3" fill="none" stroke="#555" /></svg>
            </div>
          </div>
        </aside>
      </main>

      <footer>
        <div className="flex h-[15px] items-center border-t border-[#d8d8d8] pl-[3px]">
          <div className="flex gap-2 border-r border-[#999] pr-1.5">
            {['M8 4v4M6 7c0-3 4-3 4 0L8 10v2', 'M8 7v5M8 4v1', 'M4 12c1-4 7-4 8 0M8 4v3'].map((d) => (
              <svg key={d} viewBox="0 0 16 16" className="size-[9px]" fill="none" stroke="#888" strokeWidth="1.500" aria-hidden="true">
                <circle cx="8" cy="8" r="7" />
                <path d={d} />
              </svg>
            ))}
          </div>
          <p className="flex-1 pl-1">选择对象。切换到扩充选择。拖动鼠标选择多项。</p>
          <label htmlFor="measure" className="border-l border-[#bbb] px-1">数值</label>
          <input id="measure" className="mr-0.5 h-[11px] w-[121px] border border-[#ddd] bg-[#ededed]" />
        </div>
        <div className="h-1 bg-gradient-to-r from-[#dce6f5] via-[#f1f6fa] to-[#cdeeee]" />
      </footer>
    </div>
  );
}
